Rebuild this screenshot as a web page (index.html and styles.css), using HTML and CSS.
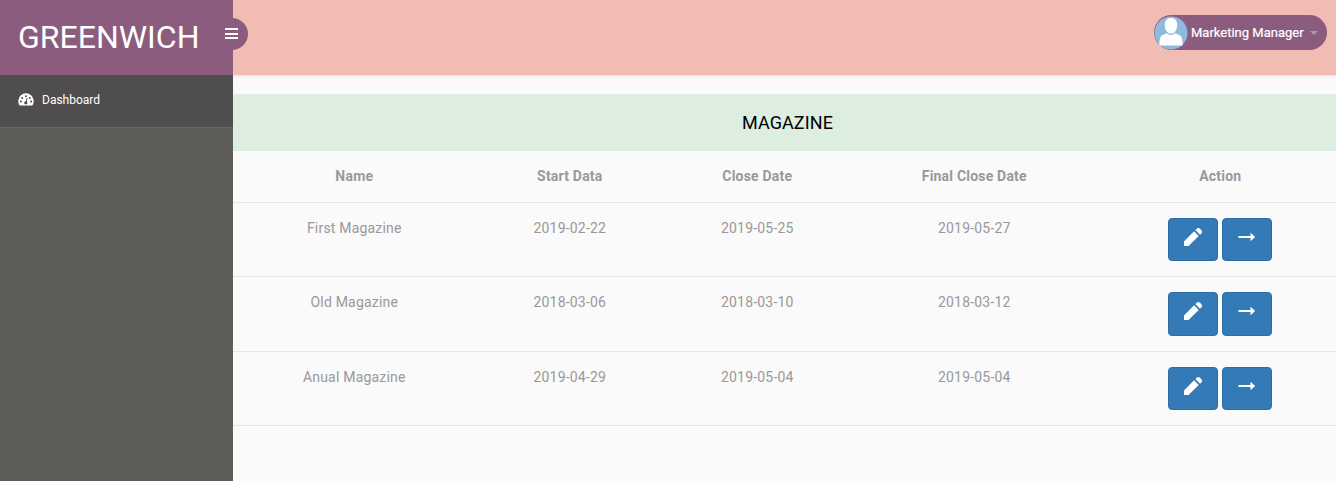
FILE: index.html
```html
<!DOCTYPE html>
<html lang="en">
<head>
<meta charset="utf-8">
<title>Greenwich</title>
<link rel="stylesheet" href="styles.css">
</head>
<body>
<svg class="defs" width="0" height="0">
  <symbol id="pencil" viewBox="0 0 20 20"><path d="M1 14.400 11.100 4.300l4.600 4.600L5.600 19H1zM12.400 3.100l1.600-1.500a2 2 0 0 1 2.800 0l1.800 1.800a2 2 0 0 1 0 2.800L17 7.700z"/></symbol>
  <symbol id="arrow" viewBox="0 0 18 10"><path d="M.5 4h12V.8L17.200 5l-4.700 4.200V6H.5z"/></symbol>
</svg>
<div class="layout">
  <aside class="sidebar">
    <div class="brand">GREENWICH
      <button class="toggle" aria-label="Menu"><span></span><span></span><span></span></button>
    </div>
    <a class="nav-item">
      <svg class="gauge" viewBox="0 0 16 13"><path fill="#fff" d="M1.700 12.500A7.700 7.700 0 1 1 14.300 12.500z"/><g fill="#504d4e"><circle cx="2.900" cy="8.400" r="1"/><circle cx="4.200" cy="4.900" r="1"/><circle cx="8" cy="3.300" r="1"/><circle cx="11.800" cy="4.900" r="1"/><circle cx="13.100" cy="8.400" r="1"/><circle cx="7.800" cy="9.800" r="1.600"/><path d="M8.700 4.900l.9.2-1.100 4.700-1.100-.3z"/></g></svg>
      <span>Dashboard</span>
    </a>
  </aside>
  <main class="main">
    <header class="topbar">
      <div class="user">
        <svg class="avatar" viewBox="0 0 34 34"><circle cx="17" cy="17" r="16.500" fill="#8fb9de"/><path fill="#fff" d="M17 2c4.200 0 6.200 2.700 6.200 7 0 5-2.800 8.800-6.200 8.800S10.800 14 10.800 9c0-4.300 2-7 6.200-7zM5.300 29.600c0-6 .9-9.800 3.700-10.800l3.700-1.500c2.600 2.400 6 2.400 8.600 0l3.700 1.500c2.800 1 3.700 4.800 3.700 10.800z"/></svg>
        <span>Marketing Manager</span>
        <i class="caret"></i>
      </div>
    </header>
    <section class="panel">
      <h1 class="title">MAGAZINE</h1>
      <table class="table">
        <colgroup><col class="c-name"><col class="c-start"><col class="c-close"><col class="c-final"><col></colgroup>
        <thead><tr><th>Name</th><th>Start Data</th><th>Close Date</th><th>Final Close Date</th><th>Action</th></tr></thead>
        <tbody>
          <tr><td>First Magazine</td><td>2019-02-22</td><td>2019-05-25</td><td>2019-05-27</td><td><div class="actions"><a class="btn"><svg class="pencil"><use href="#pencil"/></svg></a><a class="btn"><svg class="arrow"><use href="#arrow"/></svg></a></div></td></tr>
          <tr><td>Old Magazine</td><td>2018-03-06</td><td>2018-03-10</td><td>2018-03-12</td><td><div class="actions"><a class="btn"><svg class="pencil"><use href="#pencil"/></svg></a><a class="btn"><svg class="arrow"><use href="#arrow"/></svg></a></div></td></tr>
          <tr><td>Anual Magazine</td><td>2019-04-29</td><td>2019-05-04</td><td>2019-05-04</td><td><div class="actions"><a class="btn"><svg class="pencil"><use href="#pencil"/></svg></a><a class="btn"><svg class="arrow"><use href="#arrow"/></svg></a></div></td></tr>
        </tbody>
      </table>
    </section>
  </main>
</div>
</body>
</html>
```
FILE: styles.css
```css
* { box-sizing: border-box; }
body { margin: 0; overflow: hidden; background: #fafafa; font-family: Roboto, sans-serif; font-size: 14px; color: #999; }
.defs { position: absolute; }
.layout { display: flex; height: 481px; }
.sidebar { flex: 0 0 233px; background: #5e5d5a; z-index: 1; }
.brand { position: relative; height: 75px; padding-left: 18px; background: #8b5c7e; color: #fff; font-size: 32px; line-height: 75px; }
.toggle { position: absolute; top: 18px; right: -15px; width: 32px; height: 32px; padding: 0 0 1px 9px; border: 0; border-radius: 50%; background: #8b5c7e; display: flex; flex-direction: column; justify-content: center; gap: 2.5px; }
.toggle span { width: 13px; height: 2px; background: #fff; }
.nav-item { display: flex; align-items: center; height: 53px; padding: 0 18px 3px; gap: 8px; background: #504d4e; border-bottom: 1px solid #686666; color: #fff; font-size: 12px; }
.gauge { width: 16px; height: 13px; }
.main { flex: 1; min-width: 0; overflow: hidden; }
.topbar { display: flex; justify-content: flex-end; height: 75px; padding: 15px 9px 0 0; background: #f1bcb4; box-shadow: 0 1px 3px rgba(0, 0, 0, .1); }
.user { display: flex; align-items: center; width: 173px; height: 35px; border-radius: 18px; background: #8b5c7e; color: #fff; font-size: 13px; white-space: nowrap; }
.user span { width: 114px; -webkit-text-stroke: .2px #fff; }
.avatar { width: 34px; height: 34px; margin-right: 3px; }
.caret { margin-left: 5px; border: 4px solid transparent; border-top-color: #a39bb0; border-bottom: 0; }
.panel { width: 1109px; margin-top: 19px; }
.title { margin: 0; height: 57px; background: #ddede0; border-radius: 3px 3px 0 0; color: #000; font-size: 18px; font-weight: 400; line-height: 57px; text-align: center; letter-spacing: .1px; }
.table { width: 1109px; table-layout: fixed; border-collapse: separate; border-spacing: 0; text-align: center; letter-spacing: .2px; }
.c-name { width: 242px; }
.c-start { width: 189px; }
.c-close { width: 186px; }
.c-final { width: 248px; }
th, td { padding: 15px 0 15px .6px; border-bottom: 1px solid #e7e7e7; line-height: 20px; vertical-align: top; }
td:last-child { padding-left: 0; }
th { height: 52px; font-weight: 700; }
td { height: 74.4px; }
.actions { display: flex; justify-content: center; gap: 4px; }
.btn { display: flex; justify-content: center; width: 50px; height: 43.4px; padding-top: 8px; border: 1px solid #2e6da4; border-radius: 4px; background: #337ab7; fill: #fff; }
.pencil { width: 20px; height: 20px; }
.arrow { width: 18px; height: 10px; margin-top: 5px; }
```
